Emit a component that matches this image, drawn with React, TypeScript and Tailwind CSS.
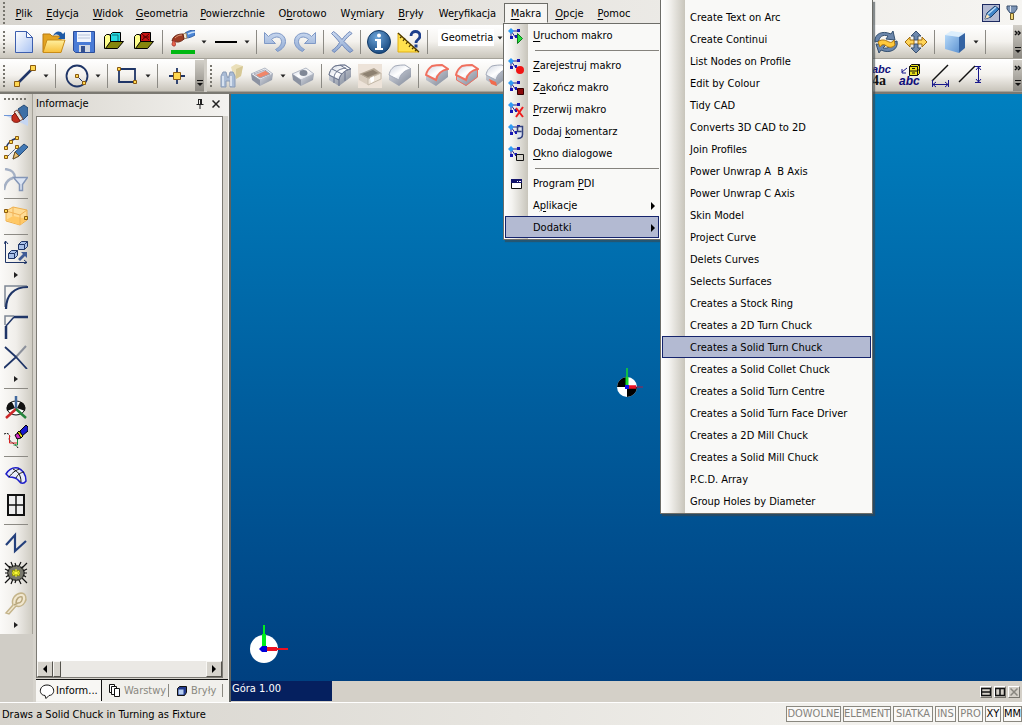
import type { ReactNode } from "react";
import { clsx } from "clsx";

// "&" marks the letter that is underlined as the keyboard shortcut
function Mnemonic({ text }: { text: string }) {
  const i = text.indexOf("&");
  if (i < 0) return <>{text}</>;
  return (
    <>
      {text.slice(0, i)}
      <span className="underline underline-offset-2">{text[i + 1]}</span>
      {text.slice(i + 2)}
    </>
  );
}

function Svg({ children, className = "size-6", box = "0 0 24 24" }: { children: ReactNode; className?: string; box?: string }) {
  return (
    <svg viewBox={box} className={clsx("block shrink-0", className)} fill="none" aria-hidden="true">
      {children}
    </svg>
  );
}

/* ---------- icons ---------- */

const NODE = { fill: "#ffd84f", stroke: "#8a5a10" };

// shared paint for the toolbar drawings
const Gradients = () => (
  <svg className="absolute size-0" aria-hidden="true">
    <defs>
      <linearGradient id="page" x1="0" y1="0" x2="1" y2="1">
        <stop offset="0" stopColor="#ffffff" />
        <stop offset="1" stopColor="#a9c3f3" />
      </linearGradient>
      <linearGradient id="folder" x1="0" y1="0" x2="0" y2="1">
        <stop offset="0" stopColor="#fff0a0" />
        <stop offset="1" stopColor="#f7bf3a" />
      </linearGradient>
      <linearGradient id="steelTop" x1="0" y1="0" x2="1" y2="1">
        <stop offset="0" stopColor="#cdd3df" />
        <stop offset="0.5" stopColor="#ffffff" />
        <stop offset="1" stopColor="#b9c1d2" />
      </linearGradient>
      <linearGradient id="steelSide" x1="0" y1="0" x2="1" y2="1">
        <stop offset="0" stopColor="#d5d9e2" />
        <stop offset="1" stopColor="#7f8796" />
      </linearGradient>
      <linearGradient id="paleBlue" x1="0" y1="0" x2="0" y2="1">
        <stop offset="0" stopColor="#c9d8ef" />
        <stop offset="1" stopColor="#8fa9d3" />
      </linearGradient>
      <linearGradient id="cube" x1="0" y1="0" x2="1" y2="1">
        <stop offset="0" stopColor="#b4d8f8" />
        <stop offset="1" stopColor="#5f94d2" />
      </linearGradient>
      <radialGradient id="ball" cx="0.4" cy="0.3" r="0.8">
        <stop offset="0" stopColor="#6ba3d8" />
        <stop offset="1" stopColor="#103f75" />
      </radialGradient>
    </defs>
  </svg>
);

const NewIcon = () => (
  <Svg>
    <path d="M3.500 1.500h11l6 6v15h-17z" fill="url(#page)" stroke="#3d5fae" />
    <path d="M14.500 1.500v6h6z" fill="#fff" stroke="#3d5fae" />
  </Svg>
);
const OpenIcon = () => (
  <Svg>
    <path d="M1 4h7l2 2h9v16H1z" fill="#e3a321" stroke="#b97a10" />
    <path d="M5 10h18l-4 12.500H1z" fill="url(#folder)" stroke="#c98c17" />
    <path d="M11 6c2-5 7-6 10-2l2-2v7h-7l2-2c-2-3-4-3-7-1z" fill="#1f5aa6" />
  </Svg>
);
const SaveIcon = () => (
  <Svg>
    <path d="M1.500 1.500h21v21h-19l-2-2z" fill="#4a7bd6" stroke="#2b4c98" />
    <path d="M5 2h14v10H5z" fill="#f1f5fd" />
    <path d="M6 5h12M6 8h12" stroke="#b9c4da" />
    <path d="M7 15h11v7H7z" fill="#d3d8e2" />
    <path d="M9 16h4v6H9z" fill="#35518f" />
  </Svg>
);
const ArchIcon = ({ color }: { color: "cyan" | "red" }) => (
  <Svg>
    <path d="M2.500 6.500l2-2h3l1 2v12h-6z" fill="#ffff8c" stroke="#000" />
    <path d="M10.500 2.500h8v9h-10v-7z" fill={color === "cyan" ? "#27d9e0" : "#c81414"} stroke="#000" />
    {color === "cyan" && <path d="M10 5h6v6" stroke="#0b6c75" />}
    {color === "red" && <path d="M10 4l7 6M17 4l-7 6M11 7h6" stroke="#500" />}
    <path d="M8.500 11.500h13l-6 7h-12z" fill="#85850c" stroke="#000" />
  </Svg>
);
const BrushIcon = () => (
  <Svg>
    <path d="M14 3c3-2 6-3 10-3v5c-3 2-6 3-9 3z" fill="#4b86d6" stroke="#335fa3" />
    <path d="M17 4c2-1 4-2 7-2" stroke="#c7def7" strokeWidth="1.500" />
    <path d="M12 4l3-1 1 5-3 1z" fill="#f0e6d2" stroke="#a58d6a" />
    <path d="M1 11c1-5 5-7 11-7l1 5c-3 3-7 4-10 2z" fill="#9c3b22" stroke="#6d2817" />
    <path d="M4 8c2-2 4-3 7-3" stroke="#dd9a75" />
    <path d="M3 10c-3 4-2 6 0 6s2-2 0-6z" fill="#e9674a" stroke="#a33" />
    <path d="M0 20h24v4H0z" fill="#00b812" />
  </Svg>
);
const LineStyleIcon = () => (
  <Svg>
    <path d="M1 12h22" stroke="#000" strokeWidth="2" />
  </Svg>
);
const UndoIcon = ({ flip = false }: { flip?: boolean }) => (
  <Svg className={clsx("size-6", flip && "-scale-x-100")}>
    <path d="M1.500 2.500v11h11l-4-4c4-4 10-3 10 2 0 4-3 6-6 8l2 2c5-2 8-6 8-10 0-9-12-11-17-5z" fill="url(#paleBlue)" stroke="#7f99c6" />
  </Svg>
);
const DeleteIcon = () => (
  <Svg>
    <path d="M1.500 3.500l2-2c3 2 6 5 8.500 8 2-3 5-6 8-8l2 2c-3 2-6 5-8 8 3 3 6 6 9 9l-3 2c-3-2-6-5-8-8-2 3-5 6-8 8l-2-2c3-2 6-5 7.500-8-2-3-5-6-8-9z" fill="url(#paleBlue)" stroke="#7189ba" />
  </Svg>
);
const InfoIcon = () => (
  <Svg>
    <circle cx="12" cy="12" r="11.500" fill="url(#ball)" stroke="#123965" />
    <circle cx="12" cy="5.500" r="2" fill="#fff" />
    <path d="M8 9h6v9h2v2H8v-2h2v-7H8z" fill="#fff" />
  </Svg>
);
const MeasureIcon = () => (
  <Svg>
    <path d="M1 3v19h21z" fill="#ffe14d" stroke="#e3b010" />
    <path d="M1 3l21 19M3 8l2-2M6 11l2-3M9 14l2-3M12 17l2-3M15 19l2-2M18 21l2-2" stroke="#4d3800" strokeWidth="1.200" />
    <path d="M14 6c0-6 9-6 9 0 0 4-4 3-4 7" stroke="#1d3f8c" strokeWidth="2.800" />
    <path d="M17.500 14.500h3v3h-3z" fill="#1d3f8c" />
  </Svg>
);
const RotateIcon = () => (
  <Svg>
    <path d="M1 12C0 4 8 0 17 4l2-3 2 9-9-1 2-3C9 4 5 7 5 11z" fill="#6b86ab" stroke="#35506f" />
    <path d="M23 11c2 9-8 13-16 9l-2 3-3-9 10 1-3 3c5 1 9-2 10-6z" fill="#6b86ab" stroke="#35506f" />
    <path d="M4 12c4-4 9-1 11 0s4 0 5-2l1 5c-4 4-7 2-10 0-2-1-4 0-5 2z" fill="#ffc93c" stroke="#b27a10" />
  </Svg>
);
const PanIcon = () => (
  <Svg>
    <path d="M12 1l5 5h-3v4h-4V6H7zM12 23l5-5h-3v-4h-4v4H7z" fill="#6d88ad" stroke="#39506f" />
    <path d="M1 12l5-5v3h4v4H6v3zM23 12l-5-5v3h-4v4h4v3z" fill="#ffd458" stroke="#a06d10" />
  </Svg>
);
const CubeIcon = () => (
  <Svg>
    <path d="M2 5l6-4 14 2-6 4z" fill="#dceefc" />
    <path d="M2 5l14 2v16L2 19z" fill="url(#cube)" />
    <path d="M16 7l6-4v15l-6 5z" fill="#3564a3" />
  </Svg>
);
const LineIcon = () => (
  <Svg>
    <path d="M4 20L20 4" stroke="#1f3567" strokeWidth="2.500" />
    <path d="M1.500 17.500h5v5h-5zM17.500 1.500h5v5h-5z" {...NODE} />
  </Svg>
);
const CircleIcon = () => (
  <Svg>
    <circle cx="12" cy="12" r="10.500" stroke="#1f3567" strokeWidth="1.800" />
    <path d="M12 12l7 7" stroke="#1f3567" />
    <path d="M10.500 10.500h3v3h-3zM17.500 17.500h3v3h-3z" {...NODE} />
  </Svg>
);
const RectIcon = () => (
  <Svg>
    <path d="M4 5h16v13H4z" stroke="#1f3567" strokeWidth="1.800" />
    <path d="M2.500 3.500h3v3h-3zM18.500 16.500h3v3h-3z" {...NODE} />
  </Svg>
);
const PointIcon = () => (
  <Svg>
    <path d="M12 4v16M4 12h16" stroke="#1f3567" strokeWidth="1.800" />
    <path d="M8.500 8.500h7v7h-7z" {...NODE} />
  </Svg>
);
const BinocularsIcon = () => (
  <Svg>
    <path d="M12 3l5-3 7 2-2 10-5 3-3-5z" fill="#eadfb9" />
    <path d="M17 5l7-3-2 10-5 3z" fill="#d6c896" />
    <path d="M2 12l2-4h3l1 4 1 2 1-2 1-4h3l2 4v11h-5v-6h-4v6H2z" fill="#a9bbd5" stroke="#8a9bb6" />
    <path d="M4 12v10M12 12v10" stroke="#e8eff8" strokeWidth="1.500" />
  </Svg>
);

type SlabKind = "slot" | "hole" | "grid" | "cavity" | "plain" | "edge" | "rim" | "corner";

// machining feature block, drawn in the same perspective for every kind
function SlabIcon({ kind }: { kind: SlabKind }) {
  if (kind === "cavity") {
    return (
      <Svg>
        <path d="M1 10l15-6 7 5-13 6z" fill="#b3a796" />
        <path d="M1 10l9 5v6l-9-5z" fill="#d8cdbf" />
        <path d="M10 15l13-6v6l-13 6z" fill="#efe7dc" stroke="#c3b8a8" />
        <path d="M4 10l11-4 5 3-10 4z" fill="#8d8171" />
        <path d="M12 14l4-2v5l-3 2z" fill="#fff" />
      </Svg>
    );
  }
  if (kind === "slot" || kind === "hole") {
    return (
      <Svg>
        <path d="M1 10l14-6 8 6-13 6z" fill="url(#steelTop)" stroke="#b2b8c5" />
        <path d="M1 10l9 6v6l-8-6z" fill="#8b92a1" />
        <path d="M10 16l13-6-1 6-12 6z" fill="url(#steelSide)" />
        {kind === "slot" && <path d="M4 10l11-4 5 4-10 4z" fill="#f0876a" stroke="#9da3b2" />}
        {kind === "slot" && <path d="M4 10l11-4v1L6 11z" fill="#c8ccd7" />}
        {kind === "hole" && <ellipse cx="12.500" cy="9" rx="4" ry="3" fill="#7f8796" />}
      </Svg>
    );
  }
  const red = kind === "edge" || kind === "rim";
  return (
    <Svg>
      <path d="M1 11v5l10 6 12-9V5l-6 1-9 7z" fill="url(#steelSide)" />
      <path d="M1 11C2 6 4 4 7 2c4-1 8-1 10-1l6 4c-6 1-11 5-12 11z" fill="url(#steelTop)" stroke={red ? "#f0705f" : "#a2a9b8"} strokeWidth={red ? 2 : 1} />
      {kind === "rim" && <path d="M1.500 11v5l9.500 5.500 11.500-8.500V5" stroke="#f0705f" />}
      {kind === "grid" && <path d="M1 11C2 6 4 4 7 2c4-1 8-1 10-1l6 4c-6 1-11 5-12 11zM11 16v6M6 13c1-5 4-8 12-9M4 5l10 5M12 1l8 5M6 14v5M17 8v9" stroke="#69738c" />}
      {kind === "corner" && <path d="M4 15l7 3 1 4-6-2z" fill="#f26a4c" />}
    </Svg>
  );
}

const TextSizeIcon = () => (
  <Svg>
    <text x="4" y="9" fontSize="11" fontWeight="bold" fontStyle="italic" fill="#0d0d7a" fontFamily="Liberation Sans, sans-serif">abc</text>
    <text x="4" y="21" fontSize="14" fontWeight="bold" fill="#111" fontFamily="Liberation Serif, serif">4a</text>
  </Svg>
);
const TextCabinetIcon = () => (
  <Svg>
    <path d="M11.500 2.500l2-2h8v9l-2 2h-8z" fill="#e9e11a" stroke="#111" />
    <path d="M11.500 2.500h8v9M11.500 7h8l2-2M14 4.500h3M14 9h3M19.500 2.500l2-2" stroke="#111" />
    <path d="M9 4L4 8m0-3v4h4" stroke="#17178c" />
    <text x="1" y="21" fontSize="12" fontWeight="bold" fontStyle="italic" fill="#0d0d7a" fontFamily="Liberation Sans, sans-serif">abc</text>
  </Svg>
);
const DimHorizontalIcon = () => (
  <Svg>
    <path d="M4 17L20 1" stroke="#111" strokeWidth="1.500" />
    <path d="M4.500 16v7M20.500 16v7M5 20.500h15M8 18l-3 2.500L8 23M17 18l3 2.500-3 2.500" stroke="#17178c" />
  </Svg>
);
const DimVerticalIcon = () => (
  <Svg>
    <path d="M1 18L17 2" stroke="#111" strokeWidth="1.500" />
    <path d="M17 2.500h6M17 18.500h6M20.500 3v15M18 6l2.500-3L23 6M18 15l2.500 3 2.500-3" stroke="#17178c" />
  </Svg>
);

const EraserIcon = () => (
  <Svg>
    <path d="M0 11h24v11z" fill="#c5d6f2" />
    <path d="M0 11.500h24" stroke="#6f97d8" />
    <path d="M14 5l6-4 4 3v7l-5 5z" fill="#3d6fa6" stroke="#274b75" />
    <path d="M13 6l6 9-3 2-6-9z" fill="#e9e4da" stroke="#7d4a3a" />
    <path d="M8 12l3-3 5 8c-2 2-7 2-8-1z" fill="#c22f1e" stroke="#7c1a10" />
  </Svg>
);
const EditCurveIcon = () => (
  <Svg>
    <path d="M2 12C3 8 7 4 13 2" stroke="#1f3567" strokeWidth="1.500" />
    <path d="M2 22L13 11" stroke="#1f3567" strokeDasharray="2 1" />
    <path d="M.5 10.500h3v3h-3zM5.500 4.500h3v3h-3zM11.500.5h3v3h-3zM.5 19.500h3v3h-3zM11.500 9.500h3v3h-3z" {...NODE} />
    <path d="M11 16l9-8 4 3-9 9-6 3z" fill="#4279b5" stroke="#274b75" />
    <path d="M11 16l4 4-6 3z" fill="#e7c27b" stroke="#76551d" />
  </Svg>
);
const FilterCurveIcon = () => (
  <Svg>
    <path d="M1 1c8 1 10 4 10 9M0 22c1-7 5-11 9-12" stroke="#a4b0c4" strokeWidth="2.500" />
    <path d="M9.500 9.500h14l-5 7v6h-3v-6z" fill="#dce5f3" stroke="#8496b7" strokeWidth="1.500" />
  </Svg>
);
const BoundsIcon = () => (
  <Svg>
    <path d="M2 7l7-4 14 3v10l-7 5-14-4z" fill="#ffdc95" stroke="#eeb04e" />
    <path d="M2 16l7-4 14 3-7 6z" fill="#ffc865" />
    <path d="M2 7l14 4 7-5M9 3v9M16 11v10" stroke="#f0b257" />
    <path d="M.5 5.500h3v3h-3zM20.500 12.500h3v3h-3z" {...NODE} />
  </Svg>
);
const TransformIcon = () => (
  <Svg>
    <path d="M1.500 1v21.500H23" stroke="#1f3567" />
    <path d="M0 4l1.500-3L4 4M20 20l3 2.500-3 1.500" stroke="#1f3567" />
    <path d="M4.500 13.500l3-3h6v5l-3 3h-6zM14.500 4.500l3-3h6v5l-3 3h-6z" fill="#a8c0ea" stroke="#1f3567" />
    <path d="M4.500 13.500h6v5m0-5l3-3M14.500 4.500h6v5m0-5l3-3" stroke="#1f3567" />
    <path d="M14 19l5-5-2-2h6v6l-2-2-5 5z" fill="#3f5b95" />
  </Svg>
);
const FilletIcon = () => (
  <Svg>
    <path d="M1 22V1h22" stroke="#7e8694" strokeWidth="1.500" />
    <path d="M2 24C2 10 10 2 24 2" stroke="#1f3567" strokeWidth="2.200" />
  </Svg>
);
const ChamferIcon = () => (
  <Svg>
    <path d="M1 10V1h9" stroke="#7e8694" strokeWidth="1.500" />
    <path d="M2 24V11M10 2h14" stroke="#1f3567" strokeWidth="2.500" />
    <path d="M2 11l8-9" stroke="#1f3567" strokeWidth="1.500" />
  </Svg>
);
const TrimIcon = () => (
  <Svg>
    <path d="M12 12L22 1" stroke="#8b909b" strokeWidth="2" />
    <path d="M0 23l12-11 11 12M1 2l11 10" stroke="#1f3567" strokeWidth="1.800" />
  </Svg>
);
const AxisIcon = () => (
  <Svg>
    <ellipse cx="12" cy="13" rx="9" ry="7" fill="#fff" stroke="#111" />
    <path d="M11 13l-8 3c-1-5 1-9 5-9zM13 13l8 3c1-5-1-9-5-9z" fill="#111" />
    <path d="M12 14V1" stroke="#42699e" strokeWidth="2.500" />
    <path d="M12 14l-10 9" stroke="#cc2828" strokeWidth="2.500" />
    <path d="M12 14l10 9" stroke="#23833b" strokeWidth="2.500" />
  </Svg>
);
const PaintCurveIcon = () => (
  <Svg>
    <path d="M0 9c5-2 7 2 5 5 2 4 7 5 9 9" stroke="#111" strokeDasharray="2 1" />
    <path d="M5.500 10v8h8" stroke="#d52222" />
    <path d="M13.500 14v6h-4" stroke="#16923a" />
    <path d="M16 6l6-6 2 2v4l-6 5z" fill="#1717cf" stroke="#000" />
    <path d="M15 6l4 5-2 2-4-5z" fill="#e6dd16" stroke="#000" />
    <path d="M11 10l3-2 3 5-4 1z" fill="#d42ac0" stroke="#000" />
  </Svg>
);
const SurfaceIcon = () => (
  <Svg>
    <path d="M2 11c3-5 7-7 12-6 5 2 8 6 8 13-2 3-5 3-7 0-3-4-7-4-10-4z" fill="#e8ebf8" stroke="#1c1cc8" strokeWidth="1.500" />
    <path d="M9 6c4 2 8 5 8 13M5 14c4-5 6-6 10-8M12 15c2-4 4-5 8-6" stroke="#111" />
  </Svg>
);
const ViewportsIcon = () => (
  <Svg>
    <path d="M4 2h16v20H4z" fill="#eee" stroke="#111" strokeWidth="2" />
    <path d="M12 2v20M4 12h16" stroke="#111" strokeWidth="1.500" />
  </Svg>
);
const ZigzagIcon = () => (
  <Svg>
    <path d="M2 14L11 4v16l11-10" stroke="#24407c" strokeWidth="2.200" />
  </Svg>
);
const BurstIcon = () => (
  <Svg>
    <ellipse cx="12" cy="12" rx="9" ry="8" fill="#77776c" />
    <path d="M1 2l5 5M23 2l-5 5M1 22l5-5M23 22l-5-5M7 1l2 5M11 2l1 3M15 5l2-4M20 5l-3 2M1 8l4 2M1 12h3M2 16l3-2M23 8l-4 2M23 12h-3M22 16l-3-2M7 23l2-5M11 22l1-3M17 23l-2-4M4 5l3 1" stroke="#111" strokeWidth="1.200" />
    <ellipse cx="12" cy="12" rx="8" ry="7" stroke="#222" strokeDasharray="2 1" />
    <path d="M8 9h8v6H8z" fill="#8e8d12" />
    <path d="M12 8v8M9 10l6 4M15 10l-6 4M8 12h8" stroke="#ffff35" />
  </Svg>
);
const HandIcon = () => (
  <Svg>
    <path d="M2 22l7-8c-2-6 2-11 8-12 5 0 6 6 4 9-2 4-6 5-9 4l-7 8z" fill="#f1e7cf" stroke="#c4b48a" strokeWidth="1.500" />
    <path d="M12 12c0-4 3-7 6-6 1 3-1 6-4 6l-4 2" stroke="#b8a77d" strokeWidth="1.500" />
  </Svg>
);

type MacroKind = "play" | "record" | "stop" | "cancel" | "comment" | "dialog";

function MacroIcon({ kind }: { kind: MacroKind }) {
  return (
    <Svg className="size-4" box="0 0 16 16">
      <path d="M3 3v6M3 3h7M3 3l5 7" stroke="#23238f" />
      <path d="M3 0l3 3-3 3-3-3z" fill="#2f9cf5" />
      <path d="M9 1h3v3H9zM2 8h3v3H2zM7 7h2v3H7z" fill="#1717b4" />
      {kind === "play" && <path d="M9.500 5.500l5 5-5 5z" fill="#25e03c" stroke="#0d7b1c" />}
      {kind === "record" && <circle cx="12" cy="12" r="4" fill="#f01414" />}
      {kind === "stop" && <path d="M9.500 8.500h6v6h-6z" fill="#8b0a0a" stroke="#300" />}
      {kind === "cancel" && <path d="M8 6l7 9M15 5l-7 10" stroke="#ee1c1c" strokeWidth="2" />}
      {kind === "comment" && <path d="M9.500 2.500h5v8c0 3-2 4-5 4M9.500 2.500v5h4" fill="#dce2f2" stroke="#33427e" strokeWidth="1.500" />}
      {kind === "dialog" && <path d="M8.500 8.500h7v6h-7z" fill="#d5d2ca" stroke="#111" />}
    </Svg>
  );
}
const ProgramIcon = () => (
  <Svg className="size-4" box="0 0 16 16">
    <path d="M3.500 3.500h10v9h-10z" fill="#fff" stroke="#111" />
    <path d="M3 3h11v4H3z" fill="#14146c" />
    <path d="M9 5.500h1m1 0h2" stroke="#fff" />
  </Svg>
);

const PinIcon = () => (
  <Svg className="h-2.5 w-2" box="0 0 8 10">
    <path d="M2.500 1v4.500M5.500 1v4.500M2 .5h4M4.500 1v4M.5 5.500h7M4 6v4" stroke="#222" />
  </Svg>
);
const CloseIcon = ({ color = "#222" }: { color?: string }) => (
  <Svg className="size-2" box="0 0 8 8">
    <path d="M.5.5l7 7M7.500.5l-7 7" stroke={color} strokeWidth="1.500" />
  </Svg>
);

/* ---------- toolbar parts ---------- */

function Tool({ label, children, tall = false, className }: { label: string; children: ReactNode; tall?: boolean; className?: string }) {
  return (
    <button
      type="button"
      aria-label={label}
      className={clsx("flex w-[30px] shrink-0 items-center justify-center", tall ? "h-8" : "h-[30px]", className)}
    >
      {children}
    </button>
  );
}

function Arrow({ label, className }: { label: string; className?: string }) {
  return (
    <button type="button" aria-label={label} className={clsx("flex h-[30px] w-3 shrink-0 items-center justify-center", className)}>
      <Svg className="h-1 w-1.5" box="0 0 6 4">
        <path d="M.5.5h5L3 3.500z" fill="#222" />
      </Svg>
    </button>
  );
}

function Flyout({ label }: { label: string }) {
  return (
    <button type="button" aria-label={label} className="flex h-3.5 w-full items-center justify-center">
      <Svg className="h-1.5 w-1" box="0 0 4 6">
        <path d="M0 0v6l4-3z" fill="#222" />
      </Svg>
    </button>
  );
}

const Sep = () => <div className="mx-[3px] h-6 w-px shrink-0 bg-[#8c8a84]" />;
const Grip = () => <div className="mr-1 ml-[3px] h-[22px] w-0 shrink-0 border-l-2 border-dotted border-[#77756e]" />;
const SideSep = () => (
  <div className="flex h-1 w-full items-center pl-1">
    <div className="h-px w-6 bg-[#8c8a84]" />
  </div>
);

function BarEnd({ chevrons = false }: { chevrons?: boolean }) {
  return (
    <button type="button" aria-label="Opcje paska narzędzi" className="flex h-full w-[9px] shrink-0 flex-col items-center justify-between bg-linear-to-b from-[#d2cfc8] to-[#8d8a83] py-1">
      <Svg className="h-2 w-2" box="0 0 8 8">
        {chevrons && <path d="M1 2l2 2-2 2M4 2l2 2-2 2" stroke="#111" strokeWidth="1.500" />}
      </Svg>
      <Svg className="h-2 w-2" box="0 0 8 8">
        <path d="M1 1.500h6" stroke="#111" />
        <path d="M1 4h6L4 7z" fill="#111" />
      </Svg>
    </button>
  );
}

const BAR = "flex items-center border-b border-[#a5a299] bg-linear-to-b from-white via-[#f4f2ee] to-[#c9c5bb]";

/* ---------- menus ---------- */

const menuBar = [
  { text: "&Plik", width: "w-[30px]" },
  { text: "&Edycja", width: "w-[47px]" },
  { text: "&Widok", width: "w-11" },
  { text: "&Geometria", width: "w-16" },
  { text: "&Powierzchnie", width: "w-[77px]" },
  { text: "O&brotowo", width: "w-[63px]" },
  { text: "W&ymiary", width: "w-[57px]" },
  { text: "&Bryły", width: "w-10" },
  { text: "We&ryfikacja", width: "w-[73px]" },
  { text: "&Makra", width: "w-11", open: true },
  { text: "&Opcje", width: "w-[43px]" },
  { text: "&Pomoc", width: "w-[46px]" },
];

type Entry = { text: string; icon?: ReactNode; sub?: boolean; active?: boolean } | null;

const macroMenu: Entry[] = [
  { text: "&Uruchom makro", icon: <MacroIcon kind="play" /> },
  null,
  { text: "&Zarejestruj makro", icon: <MacroIcon kind="record" /> },
  { text: "Z&akończ makro", icon: <MacroIcon kind="stop" /> },
  { text: "&Przerwij makro", icon: <MacroIcon kind="cancel" /> },
  { text: "Dodaj &komentarz", icon: <MacroIcon kind="comment" /> },
  { text: "&Okno dialogowe", icon: <MacroIcon kind="dialog" /> },
  null,
  { text: "Program &PDI", icon: <ProgramIcon /> },
  { text: "A&plikacje", sub: true },
  { text: "Dodatki", sub: true, active: true },
];

const addOns = [
  "Create Text on Arc",
  "Create Continui",
  "List Nodes on Profile",
  "Edit by Colour",
  "Tidy CAD",
  "Converts 3D CAD to 2D",
  "Join Profiles",
  "Power Unwrap A  B Axis",
  "Power Unwrap C Axis",
  "Skin Model",
  "Project Curve",
  "Delets Curves",
  "Selects Surfaces",
  "Creates a Stock Ring",
  "Creates a 2D Turn Chuck",
  "Creates a Solid Turn Chuck",
  "Creates a Solid Collet Chuck",
  "Creates a Solid Turn Centre",
  "Creates a Solid Turn Face Driver",
  "Creates a 2D Mill Chuck",
  "Creates a Solid Mill Chuck",
  "P.C.D. Array",
  "Group Holes by Diameter",
];

const MENU = "bg-[linear-gradient(to_right,#fff_0px,#f4f3f0_8px,#c8c5bb_24px,#f9f9f7_24px)] border border-[#6d6d68] shadow-[2px_2px_1px_rgba(60,70,75,0.6)]";

function MenuItem({ entry }: { entry: NonNullable<Entry> }) {
  return (
    <button
      type="button"
      role="menuitem"
      className={clsx(
        "flex h-[22px] w-full items-center border pt-0.5 text-left whitespace-pre",
        entry.active ? "border-[#15246c] bg-[#b3bad2]" : "border-transparent",
      )}
    >
      <span className="flex w-[27px] shrink-0 pl-0.5">{entry.icon}</span>
      <span className="flex-1">
        <Mnemonic text={entry.text} />
      </span>
      {entry.sub && (
        <Svg className="mr-0.5 h-2 w-1.5" box="0 0 6 8">
          <path d="M1 0v8l4-4z" fill="#000" />
        </Svg>
      )}
    </button>
  );
}

function MacroMenu() {
  return (
    <div role="menu" className={clsx("absolute top-full -left-px z-10 w-[158px] px-px pb-px", MENU)}>
      {macroMenu.map((entry, i) =>
        entry ? <MenuItem key={i} entry={entry} /> : <div key={i} className="mt-1 mb-0.5 ml-[30px] h-0.5 border-t border-[#85837d]" />,
      )}
    </div>
  );
}

function AddOnsMenu() {
  return (
    <div role="menu" className={clsx("absolute top-0 left-[660px] z-20 w-[213px] border-t-0 px-px pt-1.5 pb-px", MENU)}>
      {addOns.map((text) => (
        <MenuItem key={text} entry={{ text, active: text === "Creates a Solid Turn Chuck" }} />
      ))}
    </div>
  );
}

function MenuBar() {
  return (
    <nav className="flex h-[25px] shrink-0 items-center bg-linear-to-r from-[#d8d5cf] to-[#f6f5f2]">
      <Grip />
      <div className="flex items-center">
        {menuBar.map((m) => (
          <div key={m.text} className={clsx("relative", m.width)}>
            <button
              type="button"
              className={clsx(
                "flex h-5 w-full items-center justify-center border pt-0.5 whitespace-pre",
                m.open ? "border-[#6d6d68] border-b-transparent bg-[#f6f5f2]" : "border-transparent",
              )}
            >
              <span>
                <Mnemonic text={m.text} />
              </span>
            </button>
            {m.open && <MacroMenu />}
          </div>
        ))}
      </div>
      <div className="mr-1 ml-auto flex items-center gap-1.5">
        <button type="button" aria-label="Rysowanie" className="border border-[#1d2a60] bg-[#b3bad2]">
          <Svg className="size-4" box="0 0 16 16">
            <path d="M2 14l2-6 8-7 4 3-8 8z" fill="#3f84c8" stroke="#173b68" />
            <path d="M5 9l8-7" stroke="#b9dbf7" strokeWidth="1.500" />
            <path d="M2 14l2-5 3 3z" fill="#f7e3bd" />
          </Svg>
        </button>
        <button type="button" aria-label="Narzędzia">
          <Svg className="h-4 w-3" box="0 0 12 16">
            <path d="M1 1h10v3L8 8H4L1 4z" fill="#7c94b5" stroke="#3a506f" />
            <path d="M4.500 1v6" stroke="#dbe5f2" />
            <path d="M4.500 8.500h3v6h-3z" fill="#f0d475" stroke="#6b5a2a" />
          </Svg>
        </button>
      </div>
    </nav>
  );
}

function StandardBar() {
  return (
    <div className={clsx("h-[34px] shrink-0", BAR)}>
      <Grip />
      <Tool label="Nowy"><NewIcon /></Tool>
      <Tool label="Otwórz"><OpenIcon /></Tool>
      <Tool label="Zapisz"><SaveIcon /></Tool>
      <Tool label="Otwórz archiwum"><ArchIcon color="cyan" /></Tool>
      <Tool label="Zamknij archiwum"><ArchIcon color="red" /></Tool>
      <Sep />
      <Tool label="Kolor" className="ml-0.5"><BrushIcon /></Tool>
      <Arrow label="Wybierz kolor" />
      <Tool label="Rodzaj linii" className="ml-px"><LineStyleIcon /></Tool>
      <Arrow label="Wybierz rodzaj linii" />
      <Sep />
      <Tool label="Cofnij"><UndoIcon /></Tool>
      <Tool label="Ponów"><UndoIcon flip /></Tool>
      <Sep />
      <Tool label="Usuń"><DeleteIcon /></Tool>
      <Sep />
      <Tool label="Informacja"><InfoIcon /></Tool>
      <Tool label="Pomiar"><MeasureIcon /></Tool>
      <Sep />
      <select aria-label="Warstwa" className="mb-2 ml-[7px] h-[17px] w-14 appearance-none overflow-hidden bg-white pl-[3px]">
        <option>Geometria</option>
      </select>
      <Arrow label="Lista warstw" className="mb-2" />
      <div className="ml-auto flex h-full items-center">
        <Tool label="Obrót"><RotateIcon /></Tool>
        <Tool label="Przesuń"><PanIcon /></Tool>
        <Sep />
        <Tool label="Cieniowanie" className="ml-0.5"><CubeIcon /></Tool>
        <Arrow label="Rodzaj cieniowania" />
        <Sep />
        <div className="w-6" />
        <BarEnd chevrons />
      </div>
    </div>
  );
}

function GeometryBar() {
  return (
    <div className="flex h-[35px] shrink-0 border-b-2 border-[#7b7972]">
      <div className={clsx("pt-px", BAR)}>
        <Grip />
        <Tool label="Linia" className="ml-px"><LineIcon /></Tool>
        <Arrow label="Więcej linii" />
        <Sep />
        <Tool label="Okrąg" className="ml-[3px]"><CircleIcon /></Tool>
        <Arrow label="Więcej okręgów" />
        <Sep />
        <Tool label="Prostokąt" className="ml-px"><RectIcon /></Tool>
        <Arrow label="Więcej kształtów" />
        <Sep />
        <Tool label="Punkt" className="mr-[3px] ml-px"><PointIcon /></Tool>
        <BarEnd />
      </div>
      <div className={clsx("ml-[3px] flex-1 pt-px", BAR)}>
        <Grip />
        <Tool label="Szukaj cech"><BinocularsIcon /></Tool>
        <Tool label="Kieszeń" className="ml-px"><SlabIcon kind="slot" /></Tool>
        <Arrow label="Więcej kieszeni" />
        <Tool label="Otwór" className="-ml-px"><SlabIcon kind="hole" /></Tool>
        <Sep />
        <Tool label="Siatka"><SlabIcon kind="grid" /></Tool>
        <Tool label="Wnęka">
          <span className="bg-[#ede3d9]"><SlabIcon kind="cavity" /></span>
        </Tool>
        <Tool label="Powierzchnia"><SlabIcon kind="plain" /></Tool>
        <Sep />
        <Tool label="Krawędź"><SlabIcon kind="edge" /></Tool>
        <Tool label="Obrys"><SlabIcon kind="rim" /></Tool>
        <Tool label="Naroże"><SlabIcon kind="corner" /></Tool>
        <div className="ml-auto flex h-full items-center">
          <Tool label="Rozmiar tekstu"><TextSizeIcon /></Tool>
          <Tool label="Tekst z biblioteki"><TextCabinetIcon /></Tool>
          <Tool label="Wymiar poziomy"><DimHorizontalIcon /></Tool>
          <Tool label="Wymiar pionowy"><DimVerticalIcon /></Tool>
          <div className="w-7" />
          <BarEnd chevrons />
        </div>
      </div>
    </div>
  );
}

function SideBar() {
  return (
    <div className="flex w-[33px] shrink-0 flex-col items-start self-start border-r border-[#a5a299] bg-linear-to-r from-[#fbfaf8] via-[#f0eeea] to-[#cfccc3] pb-0.5">
      <div className="mt-1 ml-1 w-[22px] border-t-2 border-dotted border-[#77756e]" />
      <div className="flex flex-col pl-px">
        <Tool label="Gumka" tall><EraserIcon /></Tool>
        <Tool label="Edytuj krzywą" tall><EditCurveIcon /></Tool>
        <Tool label="Filtr" tall><FilterCurveIcon /></Tool>
      </div>
      <SideSep />
      <Tool label="Granice" tall className="ml-px"><BoundsIcon /></Tool>
      <SideSep />
      <Tool label="Przekształć" tall className="ml-px"><TransformIcon /></Tool>
      <Flyout label="Więcej przekształceń" />
      <div className="flex flex-col pl-px">
        <Tool label="Zaokrąglenie"><FilletIcon /></Tool>
        <Tool label="Fazowanie"><ChamferIcon /></Tool>
        <Tool label="Przytnij"><TrimIcon /></Tool>
      </div>
      <Flyout label="Więcej edycji" />
      <SideSep />
      <div className="flex flex-col py-0.5 pl-px">
        <Tool label="Układ współrzędnych"><AxisIcon /></Tool>
        <Tool label="Zmień płaszczyznę"><PaintCurveIcon /></Tool>
      </div>
      <SideSep />
      <div className="flex flex-col py-0.5 pl-px">
        <Tool label="Powierzchnie"><SurfaceIcon /></Tool>
        <Tool label="Okna"><ViewportsIcon /></Tool>
      </div>
      <SideSep />
      <div className="flex flex-col pt-0.5 pl-px">
        <Tool label="Łamana"><ZigzagIcon /></Tool>
        <Tool label="Rozbij"><BurstIcon /></Tool>
        <Tool label="Wskaż"><HandIcon /></Tool>
      </div>
      <Flyout label="Więcej narzędzi" />
    </div>
  );
}

function ScrollButton({ dir }: { dir: "left" | "right" }) {
  return (
    <button
      type="button"
      aria-label={dir === "left" ? "Przewiń w lewo" : "Przewiń w prawo"}
      className="flex size-4 items-center justify-center border border-[#f8f7f4] border-r-[#55534d] border-b-[#55534d] bg-[#d6d3cc]"
    >
      <Svg className={clsx("h-2 w-1", dir === "right" && "-scale-x-100")} box="0 0 4 8">
        <path d="M4 0v8L0 4z" fill="#000" />
      </Svg>
    </button>
  );
}

function InfoPanel() {
  return (
    <aside className="flex w-[196px] shrink-0 flex-col border-r border-[#f4f3f0] bg-[#d6d3cc] pl-[3px]">
      <header className="flex h-[22px] shrink-0 items-center bg-linear-to-r from-[#dad7d0] to-[#f3f2ef] pr-2 pb-[3px]">
        <h2 className="flex-1">Informacje</h2>
        <button type="button" aria-label="Przypnij" className="mr-2"><PinIcon /></button>
        <button type="button" aria-label="Zamknij"><CloseIcon /></button>
      </header>
      <div className="mr-[5px] flex flex-1 flex-col border border-[#7c7a74] bg-white">
        <div className="flex-1" />
        <div className="flex h-4 justify-between bg-[#ebe9e5]">
          <div className="flex">
            <ScrollButton dir="left" />
            <div className="h-4 w-2 border border-[#f8f7f4] border-r-[#55534d] border-b-[#55534d] bg-[#d6d3cc]" />
          </div>
          <ScrollButton dir="right" />
        </div>
      </div>
      <div role="tablist" className="mt-px flex h-[23px] shrink-0 border-t border-[#111] bg-[#f1f0ec] pb-px text-[#8a8880]">
        <button type="button" role="tab" aria-selected="true" className="flex w-[66px] items-center gap-px border-r border-[#111] bg-[#f8f7f4] pl-[3px] text-black">
          <Svg className="size-4" box="0 0 16 16">
            <path d="M6 12.500C-1 12 0 2 8 2s9 10 2 10.500l-3 3z" fill="#fff" stroke="#111" />
          </Svg>
          Inform...
        </button>
        <button type="button" role="tab" aria-selected="false" className="my-1 flex w-[67px] items-center gap-0.5 border-r border-[#8a8880] pl-1.5">
          <Svg className="size-3.5" box="0 0 14 14">
            <path d="M1.500.5h5v8h-5z" fill="#fff" stroke="#111" />
            <path d="M3.500 2.500h5v8h-5z" fill="#fff" stroke="#111" />
            <path d="M6.500 4.500h5v8h-5z" fill="#fff" stroke="#111" />
          </Svg>
          Warstwy
        </button>
        <button type="button" role="tab" aria-selected="false" className="my-1 flex w-[54px] items-center gap-1 border-r border-[#8a8880] pl-2">
          <Svg className="size-2.5" box="0 0 10 10">
            <path d="M.5 2.500l2-2h7v6l-2 3h-7z" fill="#223a8d" stroke="#111" />
            <path d="M1.500 3.500h5v5h-5z" fill="#b7cff1" />
          </Svg>
          Bryły
        </button>
      </div>
    </aside>
  );
}

// work plane origin, in the middle of the view
const OriginMarker = () => (
  <Svg className="absolute top-[46%] left-[calc(50%-12px)] h-[34px] w-8" box="0 0 32 34">
    <circle cx="12" cy="23" r="10" fill="#fff" />
    <path d="M12 23V13A10 10 0 0 0 2 23zM12 23v10a10 10 0 0 0 10-10z" fill="#000" />
    <path d="M12 4v17" stroke="#14d82c" strokeWidth="1.500" />
    <path d="M12 13v8" stroke="#14d82c" strokeWidth="3" />
    <path d="M14 23h7" stroke="#ee1122" strokeWidth="3.500" />
    <path d="M20 23h8" stroke="#a3204c" />
    <path d="M10 21h4v4h-4z" fill="#1111e8" />
  </Svg>
);

const AxisMarker = () => (
  <Svg className="absolute bottom-4 left-[19px] h-10 w-10" box="0 0 40 40">
    <circle cx="14" cy="24" r="14" fill="#fff" />
    <path d="M14 0v22" stroke="#00ee1c" strokeWidth="2" />
    <path d="M14 9v13" stroke="#00ee1c" strokeWidth="4" />
    <path d="M16 24h22" stroke="#ee1122" strokeWidth="2" />
    <path d="M16 24h11" stroke="#ee1122" strokeWidth="4" />
    <path d="M9 24l3-3h5v6h-5z" fill="#0000d8" />
  </Svg>
);

function Viewport() {
  return (
    <main className="flex min-w-0 flex-1 flex-col border-l-2 border-[#5f625f]">
      <div className="relative flex-1 bg-linear-to-b from-[#0080c0] to-[#004080]">
        <OriginMarker />
        <AxisMarker />
      </div>
      <div className="flex h-[21px] shrink-0 items-center bg-[#d4d0c8]">
        <div className="h-5 w-[101px] self-start bg-[#05205f] pt-px pl-px text-white">Góra 1.00</div>
        <div className="mr-0.5 ml-auto flex items-center gap-0.5">
          <button type="button" aria-label="Podziel poziomo" className="border border-white border-r-[#77756e] border-b-[#77756e]">
            <Svg className="h-2.5 w-2.5" box="0 0 10 10">
              <path d="M.5 1.500h9v7h-9zM0 5h10" stroke="#111" strokeWidth="1.500" />
            </Svg>
          </button>
          <button type="button" aria-label="Podziel pionowo" className="border border-white border-r-[#77756e] border-b-[#77756e]">
            <Svg className="h-2.5 w-2.5" box="0 0 10 10">
              <path d="M.5 1.500h9v7h-9zM5 1v8" stroke="#111" strokeWidth="1.500" />
            </Svg>
          </button>
          <button type="button" aria-label="Zamknij widok" className="border border-white border-r-[#77756e] border-b-[#77756e] p-px">
            <CloseIcon color="#88867f" />
          </button>
        </div>
      </div>
    </main>
  );
}

const modes = [
  { text: "DOWOLNE", width: "w-[55px]" },
  { text: "ELEMENT", width: "w-12" },
  { text: "SIATKA", width: "w-10" },
  { text: "INS", width: "w-[21px]" },
  { text: "PRO", width: "w-[25px]" },
  { text: "XY", width: "w-4", on: true },
  { text: "MM", width: "w-[19px]", on: true },
];

function StatusBar() {
  return (
    <footer className="flex h-[23px] shrink-0 items-center border-t border-white bg-linear-to-r from-[#d6d3cc] to-[#f8f7f4]">
      <p className="flex-1 pt-px pl-0.5">Draws a Solid Chuck in Turning as Fixture</p>
      <div className="flex gap-0.5">
        {modes.map((m) => (
          <button
            key={m.text}
            type="button"
            className={clsx("flex h-4 items-center justify-center border border-[#8a8880] bg-[#faf9f7]", m.width, m.on ? "text-black" : "text-[#85837d]")}
          >
            {m.text}
          </button>
        ))}
      </div>
    </footer>
  );
}

export default function App() {
  return (
    <div className="relative flex h-screen flex-col overflow-hidden bg-[#d0cdc6] font-['DejaVu_Sans_Condensed','Noto_Sans',sans-serif] text-[11px] leading-[14px] text-black">
      <Gradients />
      <MenuBar />
      <StandardBar />
      <GeometryBar />
      <div className="flex min-h-0 flex-1">
        <SideBar />
        <InfoPanel />
        <Viewport />
      </div>
      <StatusBar />
      <AddOnsMenu />
    </div>
  );
}
